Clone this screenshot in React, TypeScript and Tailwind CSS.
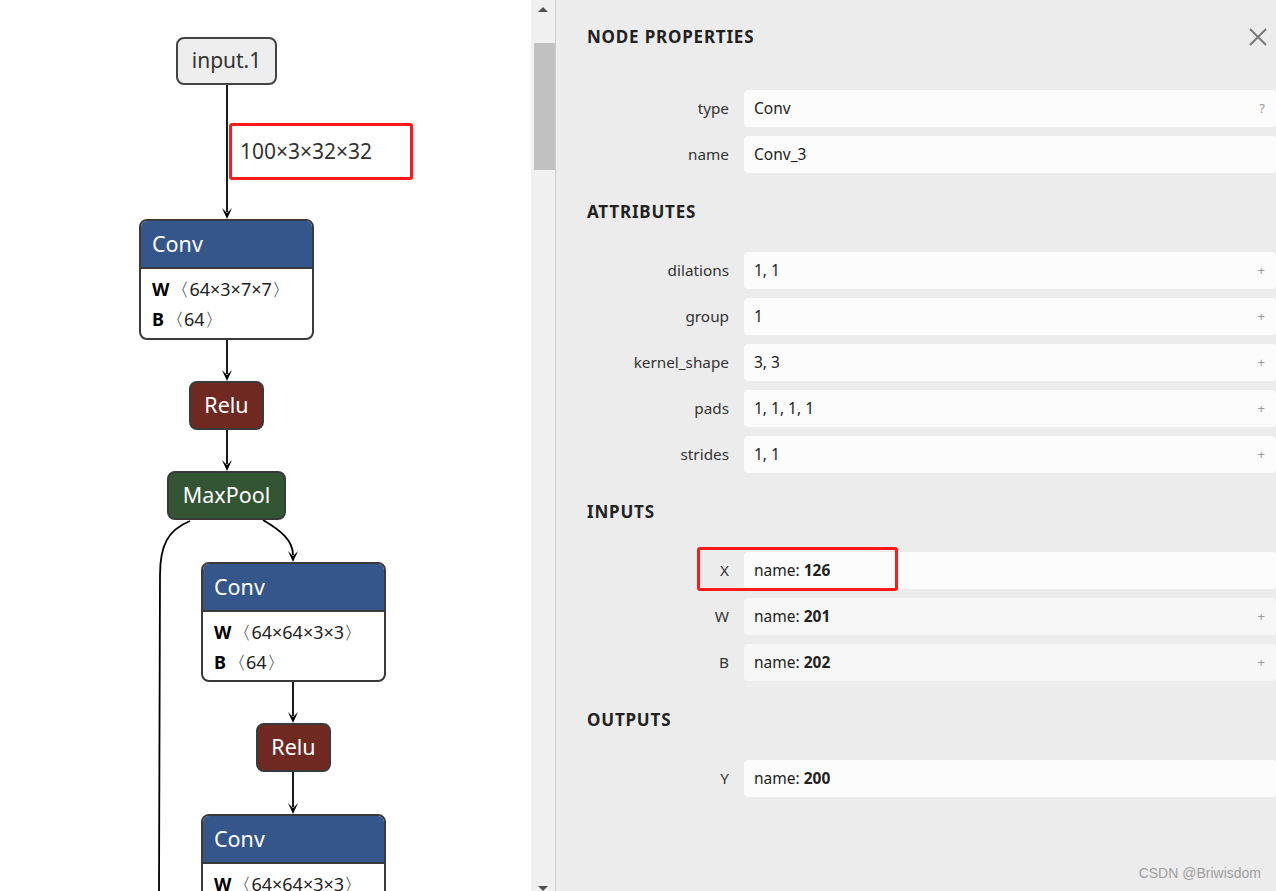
import React from "react"

const font = { fontFamily: '"Noto Sans", "Open Sans", sans-serif' }

function Arrow({ x, y }: { x: number; y: number }) {
  // arrow tip at (x, y), pointing down
  return <path d={`M ${x - 5} ${y - 11} L ${x} ${y} L ${x + 5} ${y - 11} L ${x} ${y - 6} Z`} fill="#000" />
}

function Edges() {
  return (
    <svg className="absolute inset-0 pointer-events-none" width="531" height="891">
      <g stroke="#000" strokeWidth="1.8" fill="none">
        <path d="M 227 85 L 227 212" />
        <path d="M 227 340 L 227 374" />
        <path d="M 227 430 L 227 464" />
        <path d="M 263 520 C 280 530, 293 540, 293 555" />
        <path d="M 190 521 C 168 530, 160 545, 160 575 L 159 891" />
        <path d="M 293 682 L 293 716" />
        <path d="M 293 772 L 293 807" />
      </g>
      <Arrow x={227} y={219} />
      <Arrow x={227} y={381} />
      <Arrow x={227} y={471} />
      <Arrow x={293} y={562} />
      <Arrow x={293} y={723} />
      <Arrow x={293} y={814} />
    </svg>
  )
}

function OpNode({ label, left, top, width, color }: { label: string; left: number; top: number; width: number; color: string }) {
  return (
    <div
      className="absolute h-[49px] rounded-[8px] border-2 border-[#3a3a3a] flex items-center justify-center text-white text-[21.5px]"
      style={{ left, top, width, background: color }}
    >
      {label}
    </div>
  )
}

function Params({ w }: { w: string }) {
  return (
    <div className="pl-[11px] pt-[5px] text-[18px] text-[#222] leading-[30px]">
      <div>
        <span className="font-bold text-black">W</span>
        <span className="ml-[2px]">〈{w}〉</span>
      </div>
      <div>
        <span className="font-bold text-black">B</span>
        <span className="ml-[2px]">〈64〉</span>
      </div>
    </div>
  )
}

function ConvNode({ left, top, width, height, w }: { left: number; top: number; width: number; height: number; w: string }) {
  return (
    <div
      className="absolute rounded-[8px] border-2 border-[#3a3a3a] overflow-hidden bg-white"
      style={{ left, top, width, height }}
    >
      <div className="h-[48px] bg-[#34568a] border-b-2 border-[#3a3a3a] flex items-center pl-[11px] text-white text-[21.5px]">Conv</div>
      <Params w={w} />
    </div>
  )
}

function Graph() {
  return (
    <div className="relative w-[531px] h-full bg-white overflow-hidden">
      <Edges />
      <div className="absolute left-[176px] top-[37px] w-[101px] h-[48px] rounded-[8px] border-2 border-[#444] bg-[#eeeeee] flex items-center justify-center text-[21px] text-[#333]">
        input.1
      </div>
      <div className="absolute left-[229px] top-[123px] w-[184px] h-[57px] border-[3px] border-[#ff1a1a] rounded-[3px] flex items-center pl-[8px] text-[21px] text-[#333]">
        100×3×32×32
      </div>
      <ConvNode left={139} top={219} width={175} height={121} w="64×3×7×7" />
      <OpNode label="Relu" left={189} top={381} width={75} color="#702921" />
      <OpNode label="MaxPool" left={167} top={471} width={119} color="#335533" />
      <ConvNode left={201} top={562} width={185} height={120} w="64×64×3×3" />
      <OpNode label="Relu" left={256} top={723} width={75} color="#702921" />
      <ConvNode left={201} top={814} width={185} height={120} w="64×64×3×3" />
    </div>
  )
}

function Scrollbar() {
  return (
    <div className="relative w-[25px] h-full bg-[#f0f0f0] border-r border-[#cdcdcd] flex flex-col items-center">
      <div className="h-[17px] flex items-center justify-center pt-[2px]">
        <div className="w-0 h-0 border-l-[5px] border-r-[5px] border-b-[5px] border-l-transparent border-r-transparent border-b-[#505050]" />
      </div>
      <div className="mt-[26px] ml-[2px] w-[21px] h-[127px] bg-[#c1c1c1]" />
      <div className="flex-1" />
      <div className="h-[8px] flex items-end justify-center">
        <div className="w-0 h-0 border-l-[5px] border-r-[5px] border-t-[5px] border-l-transparent border-r-transparent border-t-[#505050]" />
      </div>
    </div>
  )
}

function Row({
  label,
  children,
  icon,
  bg = "bg-[#fcfcfc]",
}: {
  label: string
  children: React.ReactNode
  icon?: string
  bg?: string
}) {
  return (
    <div className="flex h-[37px]">
      <div className="w-[188px] pr-[15px] text-right text-[15.3px] text-[#333] flex items-center justify-end">{label}</div>
      <div className={`flex-1 ${bg} rounded-[4px] flex items-center pl-[10px] pr-[10px] text-[15.5px] text-[#222]`}>
        <div className="flex-1">{children}</div>
        {icon && <span className="text-[13px] text-[#999] mr-[1px]">{icon}</span>}
      </div>
    </div>
  )
}

function Title({ children }: { children: React.ReactNode }) {
  return <div className="pl-[31px] h-[20px] leading-[20px] text-[17px] font-bold tracking-[0.8px] text-[#222]">{children}</div>
}

function Name({ v }: { v: string }) {
  return (
    <span>
      name: <b className="font-bold">{v}</b>
    </span>
  )
}

function Panel() {
  return (
    <div className="relative flex-1 h-full bg-[#ececec] pt-[27px]">
      <div className="flex items-center pr-[9px]">
        <div className="flex-1">
          <Title>NODE PROPERTIES</Title>
        </div>
        <svg width="18" height="18" viewBox="0 0 18 18">
          <path d="M1 1 L17 17 M17 1 L1 17" stroke="#777" strokeWidth="2" />
        </svg>
      </div>
      <div className="mt-[43px] flex flex-col gap-[9px]">
        <Row label="type" icon="?">Conv</Row>
        <Row label="name">Conv_3</Row>
      </div>
      <div className="mt-[29px]">
        <Title>ATTRIBUTES</Title>
      </div>
      <div className="mt-[30px] flex flex-col gap-[9px]">
        <Row label="dilations" icon="+">1, 1</Row>
        <Row label="group" icon="+">1</Row>
        <Row label="kernel_shape" icon="+">3, 3</Row>
        <Row label="pads" icon="+">1, 1, 1, 1</Row>
        <Row label="strides" icon="+">1, 1</Row>
      </div>
      <div className="mt-[29px]">
        <Title>INPUTS</Title>
      </div>
      <div className="mt-[30px] flex flex-col gap-[9px]">
        <div className="relative">
          <Row label="X">
            <Name v="126" />
          </Row>
          <div className="absolute left-[141px] top-[-5px] w-[201px] h-[44px] border-[3px] border-[#ff1a1a] rounded-[3px]" />
        </div>
        <Row label="W" icon="+" bg="bg-[#f7f7f7]">
          <Name v="201" />
        </Row>
        <Row label="B" icon="+" bg="bg-[#f7f7f7]">
          <Name v="202" />
        </Row>
      </div>
      <div className="mt-[29px]">
        <Title>OUTPUTS</Title>
      </div>
      <div className="mt-[30px] flex flex-col gap-[9px]">
        <Row label="Y">
          <Name v="200" />
        </Row>
      </div>
      <div
        className="absolute right-[15px] bottom-[7px] text-[14px] text-[#a0a0a0]"
        style={{ fontFamily: '"Liberation Sans", Arial, sans-serif' }}
      >
        CSDN @Briwisdom
      </div>
    </div>
  )
}

export default function App() {
  return (
    <div className="w-[1276px] h-[891px] flex overflow-hidden" style={font}>
      <Graph />
      <Scrollbar />
      <Panel />
    </div>
  )
}
